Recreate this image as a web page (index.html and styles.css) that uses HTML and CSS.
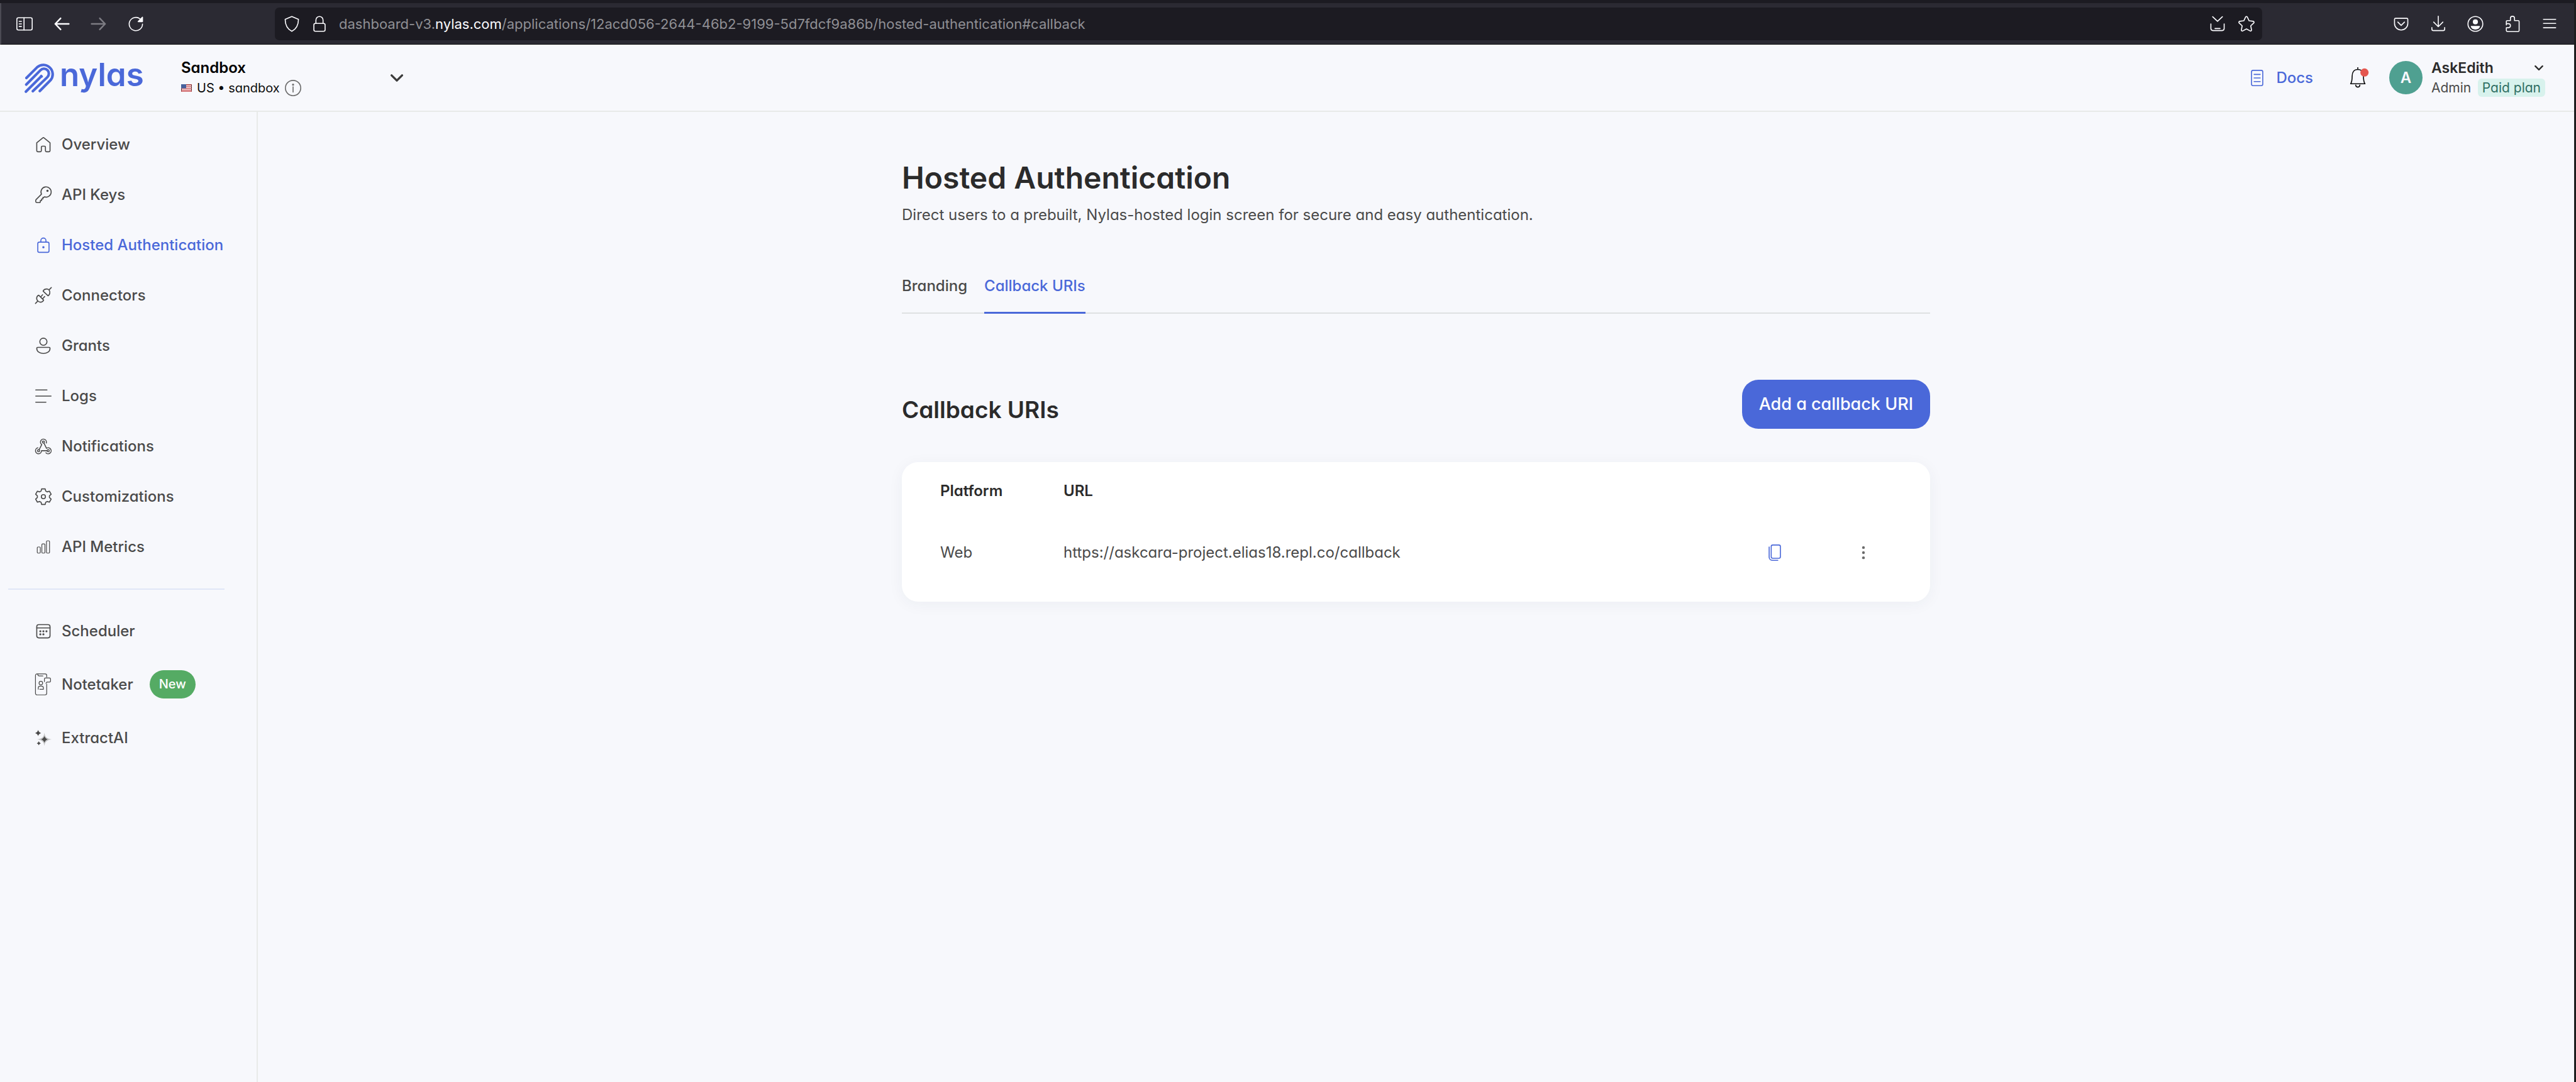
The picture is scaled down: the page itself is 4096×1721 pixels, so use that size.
FILE: index.html
```html
<!DOCTYPE html>
<html lang="en">
<head>
<meta charset="utf-8">
<title>Hosted Authentication</title>
<link rel="stylesheet" href="styles.css">
</head>
<body>
<div class="window">
  <div class="tabstrip"></div>
  <div class="toolbar">
    <div class="toolbar-group">
      <button class="tool" aria-label="Sidebar"><svg class="icon" viewBox="0 0 32 32"><rect x="1" y="4" width="30" height="24" rx="3"/><path d="M15 4v24M5.500 11h4.500M5.500 16h4.500M5.500 21h4.500"/></svg></button>
      <button class="tool" aria-label="Back"><svg class="icon heavy" viewBox="0 0 32 32"><path d="M30 16H3.500M14 5L3.500 16L14 27"/></svg></button>
      <button class="tool tool-off" aria-label="Forward"><svg class="icon heavy" viewBox="0 0 32 32"><path d="M2 16h26.500M18 5l10.500 11L18 27"/></svg></button>
      <button class="tool" aria-label="Reload"><svg class="icon" viewBox="0 0 32 32"><path d="M29 16.500A13 13 0 1 1 24 6"/><path class="solid" d="M29 3v8.500h-8.500z"/></svg></button>
    </div>
    <div class="address">
      <button class="tool" aria-label="Tracking protection"><svg class="icon" viewBox="0 0 32 32"><path d="M16 1.500L29 7c0 11-3.500 18.500-13 23.500C6.500 25.500 3 18 3 7z"/></svg></button>
      <button class="tool" aria-label="Site security"><svg class="icon" viewBox="0 0 32 32"><rect x="5" y="15" width="22" height="15.500" rx="3"/><path d="M9 15V8.500a7 7 0 0 1 14 0V15"/></svg></button>
      <div class="url">dashboard-v3.<span class="url-host">nylas.com</span>/applications/12acd056-2644-46b2-9199-5d7fdcf9a86b/hosted-authentication#callback</div>
      <div class="address-actions">
        <button class="tool" aria-label="Save to inbox"><svg class="icon" viewBox="0 0 32 32"><path d="M6.500 2L16 11L25.500 2M3 16v9a4 4 0 0 0 4 4h18a4 4 0 0 0 4-4v-9M11 25h10"/></svg></button>
        <button class="tool" aria-label="Bookmark"><svg class="icon" viewBox="0 0 32 32"><path d="M14.300 2.600a1.900 1.900 0 0 1 3.400 0l3.500 7.300 8 1a1.900 1.900 0 0 1 1 3.300l-5.800 5.500 1.500 8a1.900 1.900 0 0 1-2.800 2L16 25.800l-7.100 3.900a1.900 1.900 0 0 1-2.800-2l1.500-8-5.800-5.500a1.900 1.900 0 0 1 1-3.300l8-1z"/></svg></button>
      </div>
    </div>
    <div class="toolbar-group">
      <button class="tool" aria-label="Pocket"><svg class="icon" viewBox="0 0 32 32"><path d="M5 5h22a2 2 0 0 1 2 2v8a13 13 0 0 1-26 0V7a2 2 0 0 1 2-2zM9.500 12.500L16 19l6.500-6.500"/></svg></button>
      <button class="tool" aria-label="Downloads"><svg class="icon" viewBox="0 0 32 32"><path d="M16 1v20M7 12.500l9 9 9-9M3.500 23v3a3 3 0 0 0 3 3h19a3 3 0 0 0 3-3v-3"/></svg></button>
      <button class="tool" aria-label="Account"><svg class="icon" viewBox="0 0 32 32"><circle cx="16" cy="16" r="14.500"/><circle class="solid" cx="16" cy="12" r="4"/><path class="solid" d="M8 21h16c-1 3.500-4.500 5-8 5s-7-1.500-8-5z"/></svg></button>
      <button class="tool" aria-label="Extensions"><svg class="icon" viewBox="0 0 32 32"><path d="M4 18V11.500a2 2 0 0 1 2-2h6V5a4 4 0 0 1 8 0v4.500h7a2 2 0 0 1 2 2V29a2 2 0 0 1-2 2H6a2 2 0 0 1-2-2v-5.500h4a4 4 0 0 0 0-8H4"/></svg></button>
      <button class="tool" aria-label="Menu"><svg class="icon" viewBox="0 0 32 32"><path d="M4 7h24M4 15h24M4 23.500h24"/></svg></button>
    </div>
  </div>

  <header class="header">
    <a class="logo" href="#">
      <svg class="logo-mark" viewBox="0 0 174 174"><path d="M11 87L74 24A54 54 0 0 1 150 100L88 162M10 125L92 42A28 28 0 0 1 132 82L48 163M8 166L97 77"/><path class="logo-tip" d="M92 71L104 83"/></svg>
      <span class="wordmark">nylas</span>
    </a>
    <button class="switcher">
      <span class="stack">
        <span class="name name-app">Sandbox</span>
        <span class="detail">
          <svg class="flag" viewBox="0 0 17 12"><rect width="17" height="12" fill="#f3e4e4"/><path d="M0 1h17M0 3.800h17M0 6.600h17M0 9.400h17M0 11.500h17" stroke="#cf5a5e" stroke-width="1.300"/><rect width="8" height="6.500" fill="#46619c" stroke="none"/></svg>
          <span>US • sandbox</span>
          <svg class="info" viewBox="0 0 32 32"><circle cx="16" cy="16" r="15"/><path d="M16 13.500V24"/><circle class="solid" cx="16" cy="9.500" r="1"/></svg>
        </span>
      </span>
      <svg class="chevron" viewBox="0 0 24 14"><path d="M2 2l10 10L22 2"/></svg>
    </button>
    <div class="header-right">
      <a class="docs" href="#"><svg class="docs-icon" viewBox="0 0 24 32"><rect x="1" y="1" width="22" height="30" rx="3"/><path d="M6 9h12M6 16h12M6 23h12"/></svg>Docs</a>
      <button class="bell" aria-label="Notifications"><svg class="bell-icon" viewBox="0 0 38 40"><path d="M16 0v4M2 32c3-4 3-9 3-15C5 9 9 4 16 4s11 5 11 13c0 6 0 11 3 15zM12 34.500a4 4 0 0 0 8 0"/><circle cx="29" cy="10" r="8" fill="#e4574f" stroke="none"/></svg></button>
      <button class="account">
        <span class="avatar">A</span>
        <span class="stack account-text">
          <span class="row"><span class="name">AskEdith</span><svg class="chevron-small" viewBox="0 0 24 14"><path d="M2 2l10 10L22 2"/></svg></span>
          <span class="row"><span class="role">Admin</span><span class="plan">Paid plan</span></span>
        </span>
      </button>
    </div>
  </header>

  <div class="body">
    <nav class="sidebar">
      <a class="item" href="#"><svg class="nav-icon" viewBox="0 0 32 32"><path d="M3 12.500L14.700 2.800a2 2 0 0 1 2.600 0L29 12.500V28a2 2 0 0 1-2 2h-5a2 2 0 0 1-2-2v-7a2 2 0 0 0-2-2h-4a2 2 0 0 0-2 2v7a2 2 0 0 1-2 2H5a2 2 0 0 1-2-2z"/></svg>Overview</a>
      <a class="item" href="#"><svg class="nav-icon" viewBox="0 0 32 32"><path d="M12.200 14.600L1.800 25a2.600 2.600 0 0 0-.8 1.800V29a2 2 0 0 0 2 2h5.500a1.500 1.500 0 0 0 1.500-1.500V27h2.500v-3H15v-3h2l1-1.200a10 10 0 1 0-5.800-5.200z"/><circle class="solid" cx="24" cy="8" r="1.200"/></svg>API Keys</a>
      <a class="item item-active" href="#"><svg class="nav-icon" viewBox="0 0 32 32"><rect x="5" y="10" width="22" height="20" rx="3"/><path d="M11 10V7a5 5 0 0 1 10 0v3"/><circle class="solid" cx="16" cy="20" r="1.200"/></svg>Hosted Authentication</a>
      <a class="item" href="#"><svg class="nav-icon" viewBox="0 0 32 32"><path d="M.5 31.500L5 27M7 15.500L16.500 25c-1 3.600-7 6-11.300 1.800S3 16.500 7 15.500zM10.500 19l4-4.500M14.500 22.500l4-4.500M15.500 7.500L25 16.500c3.800-1.500 5-8.500 1.800-11.600S16.500 3.500 15.500 7.500zM27 5L31.500.5"/></svg>Connectors</a>
      <a class="item" href="#"><svg class="nav-icon" viewBox="0 0 32 32"><circle cx="16" cy="8" r="7"/><path d="M5 19h22a2 2 0 0 1 2 2c0 6-5 10-13 10S3 27 3 21a2 2 0 0 1 2-2z"/></svg>Grants</a>
      <a class="item" href="#"><svg class="nav-icon" viewBox="0 0 32 32"><path d="M1 4h22M1 16h30M1 28h20"/></svg>Logs</a>
      <a class="item" href="#"><svg class="nav-icon" viewBox="0 0 34 32"><circle cx="17" cy="7" r="2.200"/><circle cx="7" cy="25" r="2.200"/><circle cx="27" cy="25" r="2.200"/><path d="M8.200 22.800L13.600 12.200A6.200 6.200 0 1 1 23 9M5.500 19A6.200 6.200 0 1 0 13 25H24.500M18.200 9.200L23.500 20A6.200 6.200 0 1 1 22.300 29.300"/></svg>Notifications</a>
      <a class="item" href="#"><svg class="nav-icon" viewBox="0 0 32 32"><path d="M11.500 5L12.500.8h7L20.500 5l2.800 1.600 4.400-1.400 3.500 6.100L27.800 14.400v3.200l3.400 3.100-3.500 6.100-4.400-1.400L20.500 27l-1 4.200h-7L11.500 27l-2.800-1.600-4.400 1.400L.8 20.700l3.400-3.100v-3.200L.8 11.300l3.500-6.100 4.400 1.400z"/><circle cx="16" cy="16" r="4"/></svg>Customizations</a>
      <a class="item" href="#"><svg class="nav-icon faint" viewBox="0 0 32 32"><rect x="4" y="16" width="6" height="12" rx="1.500"/><rect x="13" y="10" width="6" height="18" rx="1.500"/><rect x="22" y="4" width="6" height="24" rx="1.500"/></svg>API Metrics</a>
      <hr class="divider">
      <a class="item item-tall" href="#"><svg class="nav-icon" viewBox="0 0 32 32"><rect x="3" y="3" width="26" height="26" rx="4"/><path d="M3 9.500h26"/><g class="dots"><circle cx="10" cy="16" r="2"/><circle cx="16" cy="16" r="2"/><circle cx="22" cy="16" r="2"/><circle cx="10" cy="22" r="2"/><circle cx="16" cy="22" r="2"/></g></svg>Scheduler</a>
      <a class="item item-tall" href="#"><svg class="nav-icon nav-icon-phone faint" viewBox="0 0 32 44"><path d="M22.500 7V4a3 3 0 0 0-3-3h-16a3 3 0 0 0-3 3v35a3 3 0 0 0 3 3h16a3 3 0 0 0 3-3V21M5 1.500c0 2.500 1 3.500 3 3.500h7M18 16v-5a2 2 0 0 1 2-2h8a2 2 0 0 1 2 2v4a2 2 0 0 1-2 2h-5l-2 2.500M6 31v-2.500a3.500 3.500 0 0 1 3.500-3.500h3a3.500 3.500 0 0 1 3.500 3.500V31H9"/><circle cx="11" cy="19" r="3.500"/></svg>Notetaker<span class="badge">New</span></a>
      <a class="item item-tall" href="#"><svg class="nav-icon" viewBox="0 0 32 32"><path fill="#c4c5c6" stroke="none" d="M18 5.500c1.500 9 4.500 11 14 13-9.500 2-12.500 4-14 13-1.500-9-4.500-11-14-13 9.500-2 12.500-4 14-13z"/><path class="spark" d="M18 12q1.500 5 6.500 6.500Q19.500 20 18 25q-1.500-5-6.500-6.500Q16.500 17 18 12zM5.700 0q1.200 4.800 6 6-4.800 1.200-6 6-1.200-4.800-6-6 4.800-1.200 6-6zM7 22q.8 3.200 4 4-3.200.8-4 4-.8-3.200-4-4 3.200-.8 4-4z"/></svg>ExtractAI</a>
    </nav>

    <main class="main">
      <div class="content">
        <h1 class="title">Hosted Authentication</h1>
        <p class="lead">Direct users to a prebuilt, Nylas-hosted login screen for secure and easy authentication.</p>
        <div class="tabs">
          <a class="tab" href="#branding">Branding</a>
          <a class="tab tab-active" href="#callback">Callback URIs</a>
        </div>
        <div class="section-head">
          <h2 class="subtitle">Callback URIs</h2>
          <button class="primary">Add a callback URI</button>
        </div>
        <div class="card">
          <table class="table">
            <thead><tr><th class="col-platform">Platform</th><th>URL</th><th class="col-action"></th><th class="col-action"></th></tr></thead>
            <tbody><tr>
              <td class="col-platform">Web</td>
              <td>https://askcara-project.elias18.repl.co/callback</td>
              <td class="col-action"><button class="cell-button" aria-label="Copy URL"><svg class="copy-icon" viewBox="0 0 24 32"><rect x="5" y="1" width="18" height="26" rx="3"/><path d="M1 5v20a6 6 0 0 0 6 6h11"/></svg></button></td>
              <td class="col-action"><button class="cell-button" aria-label="More"><svg class="more-icon" viewBox="0 0 32 32"><circle cx="16" cy="6" r="2.700"/><circle cx="16" cy="16" r="2.700"/><circle cx="16" cy="26" r="2.700"/></svg></button></td>
            </tr></tbody>
          </table>
        </div>
      </div>
    </main>
  </div>
</div>
</body>
</html>
```
FILE: styles.css
```css
* { box-sizing: border-box; }

body {
  margin: 0;
  background: #f7f8fc;
  color: #4a4a4a;
  font-family: Inter, "Liberation Sans", sans-serif;
  font-feature-settings: "cv11";
  font-size: 24px;
  line-height: 32px;
}

button {
  padding: 0;
  border: 0;
  background: none;
  color: inherit;
  font: inherit;
  font-feature-settings: inherit;
  text-align: left;
}

a { color: inherit; text-decoration: none; }

svg {
  display: block;
  flex: none;
  fill: none;
  stroke: currentColor;
  stroke-width: 2;
  stroke-linecap: round;
  stroke-linejoin: round;
}

.solid { fill: currentColor; }
.dots { fill: currentColor; stroke: none; }

.window {
  display: flex;
  flex-direction: column;
  min-height: 100vh;
  border-right: 3px solid #1d1d1e;
}

/* Browser chrome */
.tabstrip { height: 5px; background: #1c1b22; }

.toolbar {
  display: flex;
  align-items: center;
  height: 66px;
  padding: 0 26px 0 24px;
  border-left: 2px solid #4c4b54;
  border-bottom: 1px solid #0c0c0d;
  background: #2b2a33;
  color: #fbfbfe;
}

.toolbar-group { display: flex; gap: 33px; }

.icon { width: 26px; height: 26px; }
.heavy { stroke-width: 3; }
.tool-off { color: #7d7c83; }

.address {
  display: flex;
  flex: 1;
  align-items: center;
  gap: 18px;
  height: 52px;
  margin: 0 208px;
  padding: 0 12px 0 14px;
  border-radius: 7px;
  background: #1c1b22;
}

.url {
  flex: 1;
  color: #8f8f94;
  font-size: 22px;
  font-feature-settings: normal;
}

.url-host { color: #fbfbfe; }

.address-actions { display: flex; gap: 20px; }

/* App header */
.header {
  display: flex;
  align-items: center;
  height: 107px;
  padding: 0 46px 0 39px;
  border-bottom: 2px solid #e8eae9;
}

.logo {
  display: flex;
  align-items: center;
  gap: 8px;
  width: 249px;
  color: #4a68d9;
}

.logo-mark { width: 48px; height: 48px; stroke-width: 15; }
.logo-tip { stroke-linecap: butt; stroke-width: 10; }

.wordmark {
  padding-bottom: 10px;
  font-size: 51px;
  font-weight: 600;
  line-height: 56px;
}

.switcher {
  display: flex;
  align-items: center;
  justify-content: space-between;
  width: 353px;
  color: #0c0c0d;
}

.stack { display: flex; flex-direction: column; }
.name { color: #2b2b2b; font-weight: 600; }
.name-app { color: #000; }

.detail {
  display: flex;
  align-items: center;
  gap: 8px;
  font-size: 20px;
}

.flag { width: 17px; height: 12px; stroke-linecap: butt; }
.info { width: 26px; height: 26px; color: #6b6b6b; }

.chevron { width: 20px; height: 12px; color: #3b3b3b; stroke-width: 4; }
.chevron-small { width: 14px; height: 8px; color: #2b2b2b; stroke-width: 4; }

.header-right {
  display: flex;
  align-items: center;
  margin-left: auto;
}

.docs {
  display: flex;
  align-items: center;
  gap: 20px;
  margin-right: 58px;
  color: #4a68d9;
  font-weight: 500;
}

.docs-icon { width: 20px; height: 26px; }

.bell { margin-right: 32px; color: #0c0c0d; }
.bell-icon { width: 31px; height: 33px; }

.account { display: flex; align-items: center; gap: 14px; }

.avatar {
  width: 53px;
  height: 53px;
  border-radius: 50%;
  background: #4fa091;
  color: #f7f8fc;
  font-weight: 600;
  line-height: 53px;
  text-align: center;
}

.account-text { width: 181px; }

.row {
  display: flex;
  align-items: center;
  justify-content: space-between;
  height: 32px;
  font-size: 21px;
}

.row .name { font-size: 23px; }
.row .chevron-small { margin-right: 3px; }

.plan {
  padding: 0 7px;
  border-radius: 6px;
  background: #d8f2ed;
  color: #2f6f64;
  line-height: 29px;
}

/* Page */
.body { display: flex; flex: 1; }

.sidebar {
  flex: none;
  width: 410px;
  padding-top: 12px;
  border-right: 2px solid #e8eae9;
}

.item {
  display: flex;
  align-items: center;
  gap: 16px;
  height: 80px;
  padding-left: 56px;
  font-weight: 500;
}

.item-tall { height: 85px; }
.item-active { color: #4a68d9; }

.nav-icon { width: 26px; height: 26px; overflow: visible; }
.nav-icon-phone { height: 36px; }
.faint { stroke-width: 1.5; }
.spark { fill: currentColor; stroke: none; }

.divider {
  height: 2px;
  margin: 26px 51px 23px 13px;
  border: 0;
  background: #e0e6f7;
}

.badge {
  margin-left: 10px;
  padding: 0 15px;
  border-radius: 23px;
  background: #55ab64;
  color: #fff;
  font-size: 20px;
  line-height: 45px;
}

.main { flex: 1; padding: 77px 40px 0; }
.content { max-width: 1635px; margin: 0 auto; }

.title {
  margin: 0;
  color: #2b2b2b;
  font-size: 48px;
  font-weight: 600;
  line-height: 56px;
}

.lead { margin: 15px 0 81px; }

.tabs {
  display: flex;
  gap: 27px;
  border-bottom: 2px solid #dfe1e2;
}

.tab {
  margin-bottom: -2px;
  padding-bottom: 25px;
  border-bottom: 3px solid transparent;
  font-weight: 500;
}

.tab-active { border-bottom-color: #4a68d9; color: #4a68d9; }

.section-head {
  display: flex;
  align-items: flex-end;
  justify-content: space-between;
  margin-top: 105px;
}

.subtitle {
  margin: 0;
  color: #2b2b2b;
  font-size: 37px;
  font-weight: 600;
  line-height: 60px;
}

.primary {
  padding: 0 27px;
  border-radius: 26px;
  background: #4a68d9;
  color: #fff;
  font-size: 27px;
  font-weight: 500;
  line-height: 78px;
}

.card {
  margin-top: 53px;
  padding: 0 36px 26px 61px;
  border-radius: 26px;
  background: #fff;
  box-shadow: 0 4px 24px rgba(40, 50, 80, 0.05);
}

.table { width: 100%; border-collapse: collapse; table-layout: fixed; }
.table th, .table td { padding: 0; text-align: left; }
.table th { height: 92px; color: #2b2b2b; font-weight: 600; }
.table td { height: 104px; }
.table .col-platform { width: 196px; }
.table .col-action { width: 141px; }

.cell-button { display: block; margin: 0 auto; }
.copy-icon { width: 20px; height: 26px; color: #4a68d9; }
.more-icon { width: 26px; height: 26px; fill: #6b6b6b; stroke: none; }
```
